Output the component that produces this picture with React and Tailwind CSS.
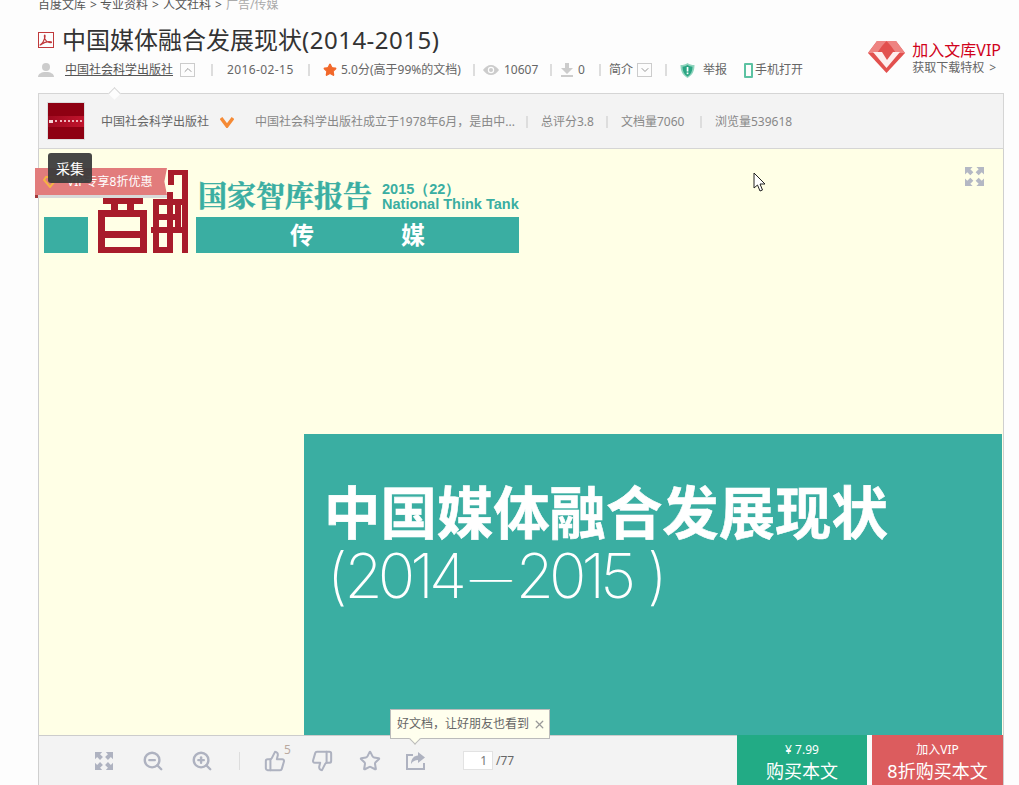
import { ThumbsUp, ThumbsDown, Star, ZoomIn, ZoomOut, ChevronUp, ChevronDown, X } from "lucide-react";

const Sep = ({ className = "" }) => <span className={`w-[2px] h-[12px] bg-[#dddddd] ${className}`} />

const ExpandIcon = ({ className = "" }) => (
    <svg viewBox="0 0 20 20" className={className} fill="currentColor">
        <path d="M0 0h8L5.600 2.400 8.800 5.600 5.600 8.800 2.400 5.600 0 8zM20 0v8l-2.400-2.400-3.200 3.200-3.200-3.200 3.200-3.200L12 0zM0 20v-8l2.400 2.400 3.200-3.200 3.200 3.200-3.200 3.200L8 20zM20 20h-8l2.400-2.400-3.200-3.200 3.200-3.200 3.200 3.200L20 12z" />
    </svg>
)

const PdfIcon = () => (
    <svg viewBox="0 0 16 16" className="w-[16px] h-[16px]" fill="none" stroke="#c0393b">
        <rect x="0.5" y="0.5" width="15" height="15" />
        <path d="M2 13c2-1 4-4 5-8 .2-1 .1-2-.3-2-.5 0-.5 2 .3 4 1 2 3 3.500 6 3.700.7 0 .7-.8 0-.9-2.500-.4-7 .5-9.500 2.500-.7.600-1.500.8-1.500.7z" strokeWidth="1.100" />
    </svg>
)

const Seal = () => (
    <svg viewBox="0 0 90 83" className="w-[90px] h-[83px]" fill="#a81c2b">
        <rect x="2" y="0" width="4" height="3" />
        <rect x="52" y="0" width="4" height="3" />
        {/* left glyph */}
        <rect x="5" y="27" width="40" height="7" />
        <rect x="13" y="27" width="7" height="15" />
        <rect x="29" y="27" width="7" height="15" />
        <rect x="0" y="40" width="49" height="7" />
        <rect x="0" y="40" width="7" height="43" />
        <rect x="42" y="40" width="7" height="43" />
        <rect x="0" y="61" width="49" height="7" />
        <rect x="0" y="77" width="49" height="6" />
        {/* right glyph */}
        <rect x="70" y="0" width="20" height="5" />
        <rect x="70" y="0" width="6" height="15" />
        <rect x="84" y="0" width="6" height="83" />
        <rect x="55" y="29" width="35" height="6" />
        <rect x="55" y="29" width="6" height="34" />
        <rect x="77" y="29" width="6" height="34" />
        <rect x="55" y="44" width="28" height="6" />
        <rect x="53" y="57" width="37" height="6" />
        <rect x="69" y="22" width="6" height="61" />
        <rect x="55" y="57" width="6" height="26" />
        <rect x="55" y="77" width="20" height="6" />
    </svg>
)

const App = () => {
    return (
        <div className="relative w-[1019px] h-[785px] overflow-hidden bg-[#fdfdfd] text-[12px] text-[#666666] font-['Noto_Sans','Noto_Sans_CJK_SC',sans-serif]">

            {/* Breadcrumb */}
            <div className="flex items-center gap-[4px] pl-[38px] h-[9px] leading-[9px] text-[#555555]">
                <span>百度文库</span><span className="w-[6px]">&gt;</span>
                <span>专业资料</span><span className="w-[7px]">&gt;</span>
                <span>人文社科</span><span className="w-[7px]">&gt;</span>
                <span className="text-[#aaaaaa]">广告/传媒</span>
            </div>

            {/* Title + VIP */}
            <div className="flex justify-between pl-[38px] pr-[18px] mt-[18px]">
                <div>
                    <div className="flex items-center h-[26px] gap-[8px]">
                        <PdfIcon />
                        <h1 className="text-[24px] leading-[26px] text-[#333333] font-normal">中国媒体融合发展现状<span className="tracking-[0.5px]">(2014-2015)</span></h1>
                    </div>

                    <div className="flex items-center h-[18px] mt-[8px] whitespace-nowrap">
                        <svg viewBox="0 0 16 14" className="w-[16px] h-[14px]" fill="#cccccc">
                            <circle cx="8" cy="4" r="4" />
                            <path d="M0 14c0-3 3-5 8-5s8 2 8 5z" />
                        </svg>
                        <span className="ml-[11px] w-[109px] underline text-[#555555]">中国社会科学出版社</span>
                        <span className="ml-[6px] w-[15px] h-[14px] border border-[#cccccc] flex items-center justify-center"><ChevronUp size={12} color="#999999" /></span>
                        <Sep className="ml-[16px]" />
                        <span className="ml-[14px] w-[68px] tracking-[0.4px]">2016-02-15</span>
                        <Sep className="ml-[13px]" />
                        <Star size={14} fill="#f2682a" color="#f2682a" className="ml-[13px]" />
                        <span className="ml-[4px] w-[122px]">5.0分(高于99%的文档)</span>
                        <Sep className="ml-[10px]" />
                        <svg viewBox="0 0 16 10" className="ml-[8px] w-[16px] h-[10px]" fill="#cccccc">
                            <path d="M0 5c2-3 5-5 8-5s6 2 8 5c-2 3-5 5-8 5s-6-2-8-5z" />
                            <circle cx="8" cy="5" r="3.200" fill="#fdfdfd" />
                            <circle cx="8" cy="5" r="2" />
                        </svg>
                        <span className="ml-[5px] w-[36px]">10607</span>
                        <Sep className="ml-[10px]" />
                        <svg viewBox="0 0 12 14" className="ml-[9px] w-[12px] h-[14px]" fill="#cccccc">
                            <path d="M4 0h4v5h4L6 11 0 5h4zM0 12h12v2H0z" />
                        </svg>
                        <span className="ml-[5px] w-[8px]">0</span>
                        <Sep className="ml-[13px]" />
                        <span className="ml-[8px] w-[25px]">简介</span>
                        <span className="ml-[3px] w-[15px] h-[14px] border border-[#cccccc] flex items-center justify-center"><ChevronDown size={12} color="#999999" /></span>
                        <Sep className="ml-[13px]" />
                        <svg viewBox="0 0 15 15" className="ml-[13px] w-[15px] h-[15px]">
                            <path d="M7.500 0c2 1.500 4 2 7 2 0 6-2 10-7 13-5-3-7-7-7-13 3 0 5-.5 7-2z" fill="#8fd4bd" />
                            <path d="M7.500 2c2 1 3 1.500 5 1.700 0 4.500-1.500 7.500-5 9.800-3.500-2.300-5-5.300-5-9.800 2-.2 3-.7 5-1.700z" fill="#2aa583" />
                            <rect x="6.700" y="4" width="1.700" height="4.500" fill="#ffffff" />
                            <rect x="6.700" y="9.500" width="1.700" height="1.700" fill="#ffffff" />
                        </svg>
                        <span className="ml-[8px] w-[25px]">举报</span>
                        <span className="ml-[16px] w-[9px] h-[15px] border-2 border-[#5cc2a2] rounded-[1px]" />
                        <span className="ml-[2px]">手机打开</span>
                    </div>
                </div>

                <div className="flex items-start mt-[14px]">
                    <svg viewBox="0 0 37 32" className="w-[37px] h-[32px]">
                        <path d="M9 0h19l9 12-18.500 20L0 12z" fill="#e2504e" />
                        <path d="M9 0h9.500L14 5 9 12H0zM28 0l9 12h-9l-5-7-4.500-5z" fill="#ee8482" />
                        <path d="M5 11h9l5 8 6-8h7L18.500 27z" fill="#fdeeee" />
                    </svg>
                    <div className="ml-[7px] mt-[-1px]">
                        <div className="text-[16px] leading-[20px] text-[#d0021b]">加入文库VIP</div>
                        <div className="leading-[15px] text-[#666666]">获取下载特权<span className="ml-[5px]">&gt;</span></div>
                    </div>
                </div>
            </div>

            {/* Doc */}
            <div className="ml-[38px] w-[966px] mt-[14px] border-x border-[#cfcfcf]">

                {/* Publisher bar */}
                <div className="relative flex items-center h-[56px] -mx-px pt-[2px] border border-[#d5d5d5] bg-[#f3f3f3] whitespace-nowrap">
                    <span className="absolute -top-[5px] left-[71px] w-[9px] h-[9px] rotate-45 bg-[#fdfdfd] border-l border-t border-[#d5d5d5]" />
                    <div className="ml-[8px] -mt-[2px] w-[38px] h-[38px] border border-[#dddddd] bg-[#8e0012] flex items-center">
                        <div className="w-full h-[11px] bg-gradient-to-r from-[#a00a20] to-[#c0142c] flex items-center pl-[1px] gap-[2px]">
                            <span className="w-[4px] h-[3px] bg-[#f5d5d8]" />
                            <span className="w-[27px] border-t-2 border-dotted border-[#eeb6bc]" />
                        </div>
                    </div>
                    <span className="ml-[16px] w-[108px]">中国社会科学出版社</span>
                    <svg viewBox="0 0 14 11" className="ml-[11px] w-[14px] h-[11px]" fill="none" stroke="#f58a35" strokeWidth="3.400">
                        <path d="M1 1l6 8 6-8" />
                    </svg>
                    <span className="ml-[21px] w-[261px] text-[#888888]">中国社会科学出版社成立于1978年6月，是由中...</span>
                    <Sep className="ml-[10px]" />
                    <span className="ml-[13px] w-[54px] text-[#888888]">总评分3.8</span>
                    <Sep className="ml-[11px]" />
                    <span className="ml-[13px] w-[65px] text-[#888888]">文档量7060</span>
                    <Sep className="ml-[14px]" />
                    <span className="ml-[13px] text-[#888888]">浏览量539618</span>
                </div>

                {/* Page */}
                <div className="relative h-[586px] bg-[#ffffe6] flex flex-col">
                    <div className="h-[285px] pt-[21px] pl-[5px] flex items-start">
                        <div className="w-[44px] h-[36px] mt-[47px] bg-[#3aaea2]" />
                        <div className="ml-[10px]"><Seal /></div>
                        <div className="ml-[8px] w-[323px]">
                            <div className="flex items-center h-[47px] pt-[4px] pl-[2px] text-[#3aaea2] font-bold">
                                <span className="-mt-[2px] text-[29px] leading-[36px] [-webkit-text-stroke:0.5px_#3aaea2] font-['Noto_Serif_CJK_SC','Noto_Sans_CJK_SC',serif]">国家智库报告</span>
                                <div className="ml-[10px] mt-[2px] text-[14.5px] leading-[15px] font-['Liberation_Sans',sans-serif] whitespace-nowrap">
                                    <div>2015（22）</div>
                                    <div>National Think Tank</div>
                                </div>
                            </div>
                            <div className="h-[36px] bg-[#3aaea2] flex items-center text-white text-[24px] font-bold pl-[94px] gap-[87px] leading-[36px]">
                                <span>传</span>
                                <span>媒</span>
                            </div>
                        </div>
                    </div>
                    <div className="self-end mr-[1px] w-[698px] h-[301px] bg-[#3aaea2] pt-[47px] pl-[20px] text-white whitespace-nowrap">
                        <div className="text-[56.4px] leading-[64px] font-bold [-webkit-text-stroke:0.6px_#ffffff]">中国媒体融合发展现状</div>
                        <div className="mt-[2px] text-[62px] leading-[58px] font-extralight tracking-[-5px] font-['Inter',sans-serif]">
                            <span className="ml-[3px]">(</span>
                            <span className="ml-[2px]">2014</span>
                            <span className="relative -top-[4px] ml-[8px] text-[42px] tracking-normal">—</span>
                            <span className="ml-[4px]">2015</span>
                            <span className="ml-[16px]">)</span>
                        </div>
                    </div>

                    <ExpandIcon className="absolute top-[18px] right-[19px] w-[19px] h-[19px] text-[#b4b8c4]" />

                    {/* Cursor */}
                    <svg viewBox="0 0 13 20" className="absolute top-[23px] left-[714px] w-[13px] h-[20px]">
                        <path d="M1 1v15l3.500-3 2.500 6 2.500-1-2.500-6h5z" fill="#ffffff" stroke="#222222" />
                    </svg>
                </div>

                {/* Toolbar */}
                <div className="relative flex h-[50px]">
                    <div className="relative flex items-center w-[698px] bg-[#f3f3f3] border-t border-[#cccccc] text-[#aeb2c0]">
                        <ExpandIcon className="ml-[56px] w-[18px] h-[18px]" />
                        <ZoomOut size={22} strokeWidth={2.6} className="ml-[29px]" />
                        <ZoomIn size={22} strokeWidth={2.6} className="ml-[27px]" />
                        <span className="ml-[26px] w-[1px] h-[18px] bg-[#dddddd]" />
                        <ThumbsUp size={22} strokeWidth={2.2} className="ml-[24px]" />
                        <span className="self-start mt-[8px] ml-[-2px] w-[8px] text-[#b9a9a0] leading-[12px]">5</span>
                        <ThumbsDown size={22} strokeWidth={2.2} className="ml-[19px]" />
                        <Star size={22} strokeWidth={2.2} className="ml-[26px]" />
                        <svg viewBox="0 0 20 20" className="ml-[25px] w-[20px] h-[20px]" fill="none" stroke="currentColor" strokeWidth="2">
                            <path d="M7 4H1v14h17v-6" />
                            <path d="M12 1l7 5.500-7 5.500V9c-3 0-5 1-7 4 0-5 3-8.500 7-8.500z" fill="currentColor" stroke="none" />
                        </svg>
                        <span className="ml-[37px] w-[30px] h-[19px] border border-[#e2e2e2] bg-white text-right pr-[5px] leading-[17px] text-[#777777]">1</span>
                        <span className="ml-[3px] text-[#666666]">/77</span>

                        {/* Share popover */}
                        <div className="absolute -top-[27px] left-[351px] flex items-center w-[160px] h-[30px] pl-[6px] bg-[#ffffee] border border-[#bbbbbb] text-[#666666] whitespace-nowrap">
                            <span>好文档，让好朋友也看到</span>
                            <X size={13} strokeWidth={2.4} color="#999999" className="ml-[4px]" />
                            <span className="absolute -bottom-[5px] left-[20px] w-[8px] h-[8px] rotate-45 bg-[#ffffee] border-r border-b border-[#bbbbbb]" />
                        </div>
                    </div>
                    <div className="w-[130px] bg-[#22ab85] text-white text-center">
                        <div className="mt-[7px] leading-[16px]">¥ 7.99</div>
                        <div className="text-[18px] leading-[26px]">购买本文</div>
                    </div>
                    <div className="w-[5px] bg-[#fafafa]" />
                    <div className="w-[131px] bg-[#dc5c5e] text-white text-center">
                        <div className="mt-[7px] leading-[16px]">加入VIP</div>
                        <div className="text-[18px] leading-[26px]">8折购买本文</div>
                    </div>
                </div>
            </div>

            {/* Ribbon */}
            <div className="absolute top-[168px] left-[35px] w-[132px] h-[27px] bg-[#e27c7c] text-white flex items-center [clip-path:polygon(0_0,100%_0,98%_50%,100%_100%,0_100%)]">
                <svg viewBox="0 0 14 12" className="ml-[8px] w-[14px] h-[12px]" fill="none" stroke="#f5b342" strokeWidth="2">
                    <path d="M3 1h8l2 3-6 7-6-7z" />
                </svg>
                <span className="ml-[10px] whitespace-nowrap">VIP专享8折优惠</span>
            </div>
            <div className="absolute top-[195px] left-[38px] w-[129px] h-[3px] bg-[#d9d9d9]" />
            <div className="absolute top-[195px] left-[35px] w-[3px] h-[3px] bg-[#a13a3a]" />

            {/* Tooltip */}
            <div className="absolute top-[153px] left-[48px] w-[44px] h-[30px] rounded-[3px] bg-[#3c3c3c]/95 text-white text-[14px] flex items-center justify-center">采集</div>
        </div>
    )
}

export default App
